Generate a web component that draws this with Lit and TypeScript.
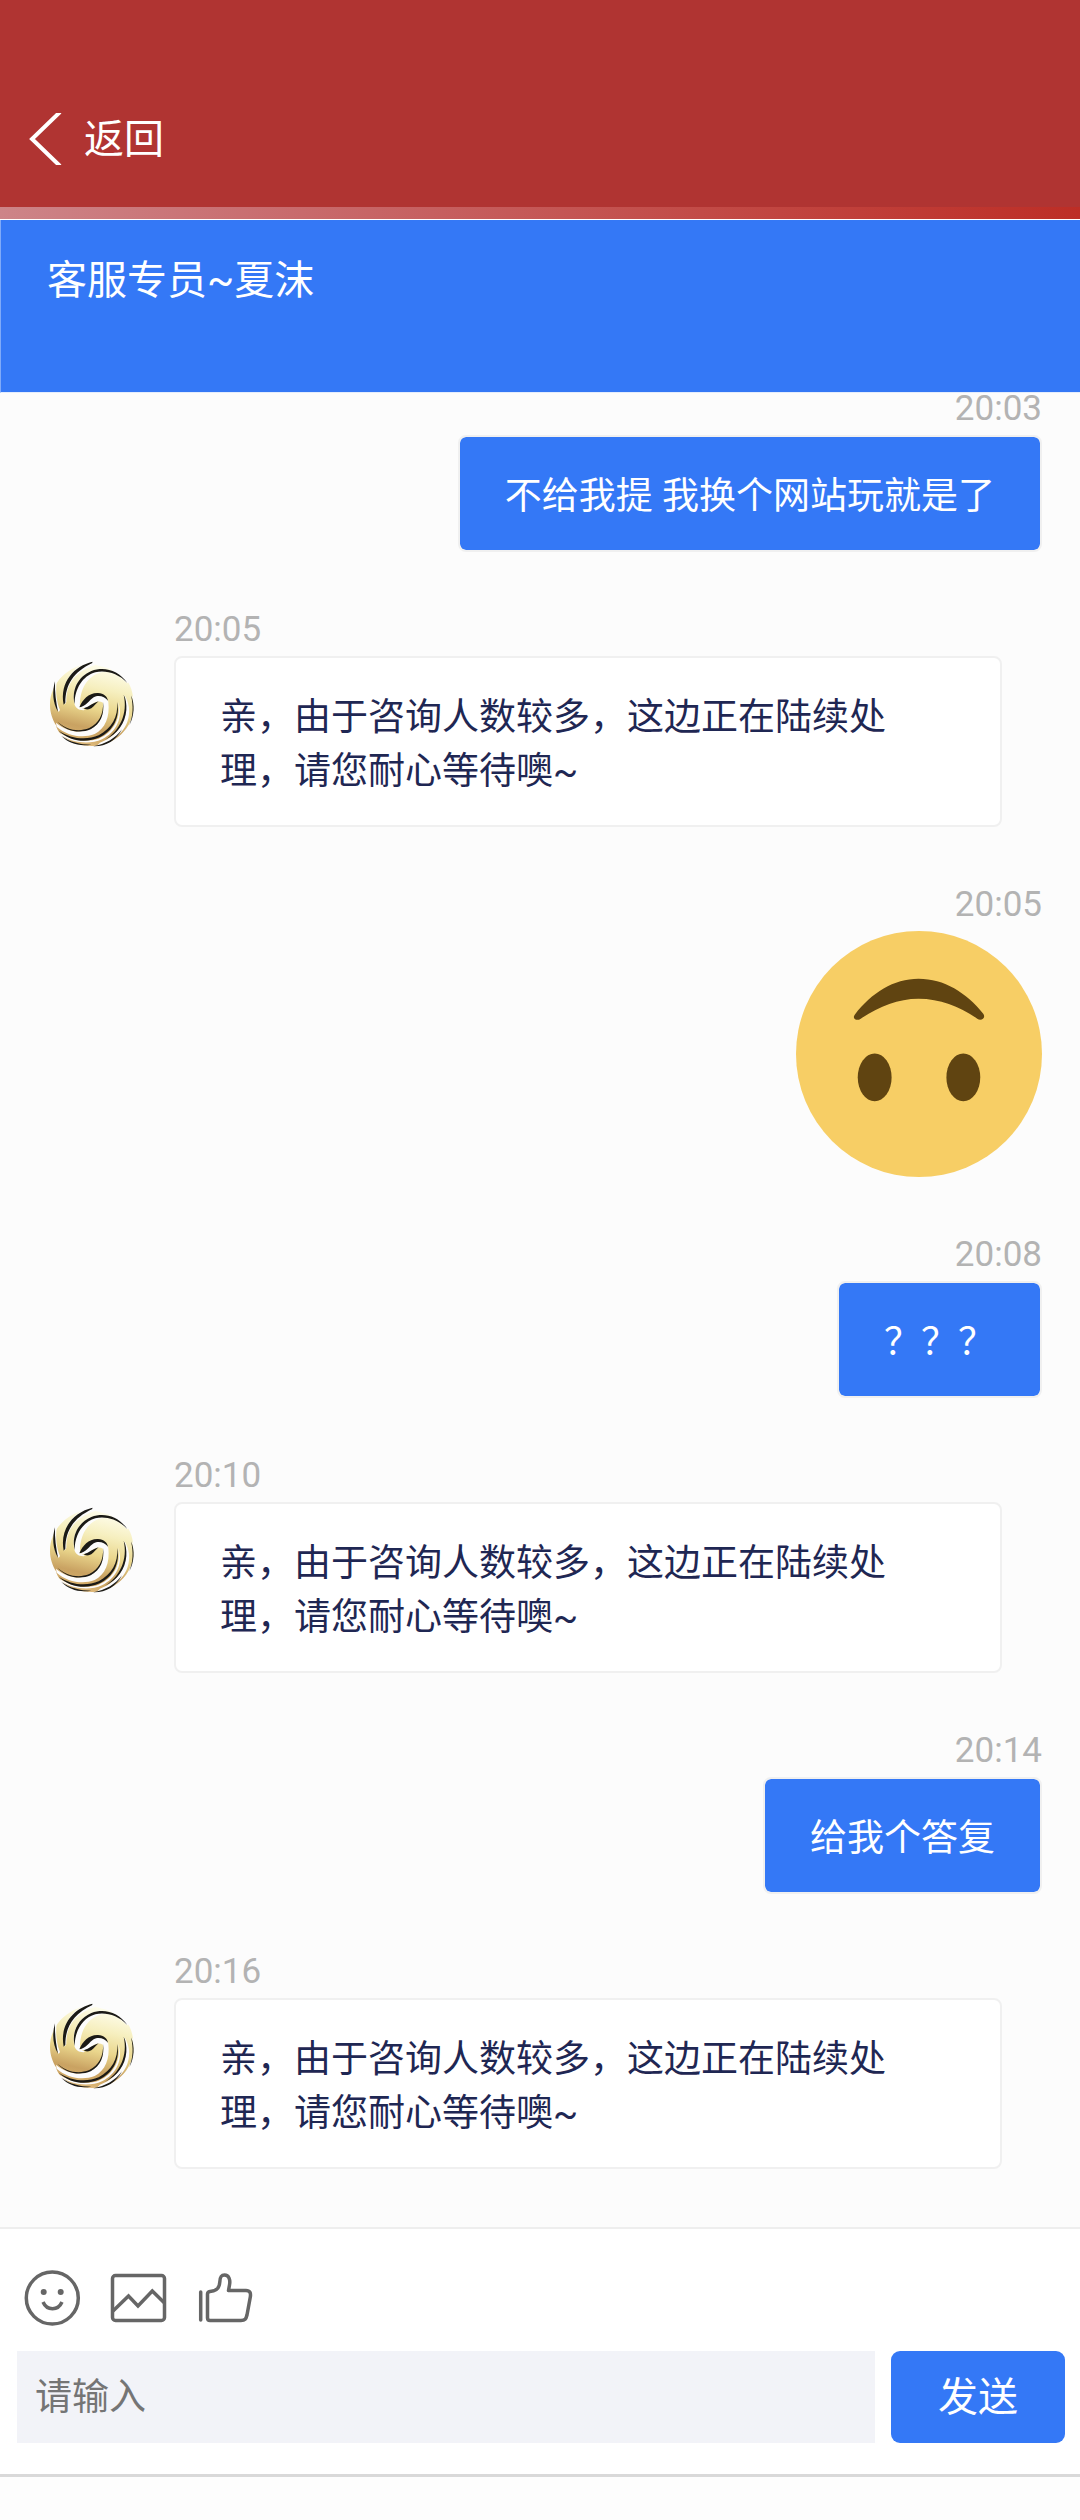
import { LitElement, html, css, svg, nothing } from "lit";
import { customElement, property } from "lit/decorators.js";

type Message = {
  side: "agent" | "visitor";
  time: string;
  text?: string;
  emoji?: boolean;
};

const WAIT_REPLY = "亲，由于咨询人数较多，这边正在陆续处理，请您耐心等待噢~";

const MESSAGES: Message[] = [
  { side: "visitor", time: "20:03", text: "不给我提 我换个网站玩就是了" },
  { side: "agent", time: "20:05", text: WAIT_REPLY },
  { side: "visitor", time: "20:05", emoji: true },
  { side: "visitor", time: "20:08", text: "？？？" },
  { side: "agent", time: "20:10", text: WAIT_REPLY },
  { side: "visitor", time: "20:14", text: "给我个答复" },
  { side: "agent", time: "20:16", text: WAIT_REPLY },
];

@customElement("phoenix-avatar")
export class PhoenixAvatar extends LitElement {
  static styles = css`
    :host {
      display: block;
    }
    .logo {
      display: block;
      width: 88px;
      height: 88px;
    }
  `;

  render() {
    return html`
      <svg class="logo" viewBox="54 62 264 264" role="img" aria-label="客服头像">
        <defs>
          <linearGradient id="gold" gradientUnits="userSpaceOnUse" x1="215" y1="70" x2="160" y2="320">
            <stop offset="0" stop-color="#fffff2" />
            <stop offset="0.3" stop-color="#f6efbf" />
            <stop offset="0.55" stop-color="#ead68c" />
            <stop offset="0.78" stop-color="#c9a262" />
            <stop offset="0.9" stop-color="#d2ab68" />
            <stop offset="1" stop-color="#e2bd80" />
          </linearGradient>
        </defs>
        ${svg`
        <path fill="url(#gold)" d="M184 70C118 78 60 128 60 196C60 222 68 240 78 258C84 290 130 322 190 320C250 318 312 270 311 196C310 160 302 134 286 118C262 84 228 70 184 70Z" />
        <g fill="#fcfcfc">
          <path d="M184 66C132 80 92 124 104 196L109 188C108 136 132 98 196 76L240 88L292 132L300 122L240 60Z" />
          <path d="M76 124C66 158 70 190 86 218L90 212C80 188 76 158 80 128Z" />
          <path d="M290 132C268 94 212 80 172 102C138 122 124 160 134 196C138 208 150 214 166 212L150 203C148 156 168 110 216 98C250 94 272 106 290 132Z" />
          <path d="M152 206C166 188 176 168 202 166C222 166 232 176 235 188C240 232 226 268 194 284C158 298 112 290 80 262L78 250C112 280 158 284 190 264C216 244 222 218 219 190C206 182 192 188 180 200C172 206 162 208 152 206Z" />
          <path d="M264 186C276 234 250 280 206 298C170 310 124 304 90 280L94 288C130 312 180 316 216 300C258 280 282 234 264 186Z" />
          <path d="M282 166C302 222 274 286 210 310L200 320C262 306 302 262 297 206C295 190 290 176 282 166Z" />
          <path d="M304 166C316 200 314 232 300 264L318 240L320 190Z" />
        </g>
        <g fill="#1b1a16">
          <path d="M187 67C134 80 88 126 101 196L106 190C106 136 130 98 187 71Z" />
          <path d="M75 126C66 158 68 190 84 217C78 188 74 160 75 126Z" />
          <path d="M134 194C124 152 144 112 184 95C224 80 266 94 292 131C264 102 228 92 196 99C158 110 134 148 134 194Z" />
          <path d="M148 204C158 180 176 160 204 161C222 162 232 172 234 184C224 170 204 166 191 174C178 182 168 202 148 204Z" />
          <path d="M161 207C178 202 190 190 206 186C194 196 188 208 176 210C170 211 165 210 161 207Z" />
          <path d="M219 188C221 226 206 252 178 266C144 280 108 270 82 247C108 276 150 284 182 270C212 254 224 224 219 188Z" />
          <path d="M261 188C266 232 244 268 206 288C168 304 122 298 86 274C122 308 170 312 209 294C250 274 272 232 261 188Z" />
          <path d="M281 166C294 222 270 274 224 302C262 284 286 252 289 212C290 194 288 178 281 166Z" />
          <path d="M303 168C311 202 309 230 298 258C313 230 315 196 303 168Z" />
          <path d="M276 270C256 298 226 314 190 321C228 322 258 304 276 270Z" />
          <path d="M94 290C116 312 146 322 184 316C150 316 120 308 94 290Z" />
        </g>
        `}
      </svg>
    `;
  }
}

@customElement("chat-message")
export class ChatMessage extends LitElement {
  @property({ attribute: false }) message!: Message;

  static styles = css`
    :host {
      display: block;
    }
    .row {
      display: flex;
      gap: 38px;
      padding: 0 78px 0 48px;
    }
    .row.visitor {
      justify-content: flex-end;
      padding: 0 38px;
    }
    .avatar {
      padding-top: 46px;
    }
    .body {
      display: flex;
      flex-direction: column;
      align-items: flex-start;
      min-width: 0;
    }
    .agent .body {
      flex: 1;
    }
    .visitor .body {
      align-items: flex-end;
    }
    .time {
      margin-bottom: 10px;
      font-size: 35px;
      line-height: 32px;
      color: #b3b3b3;
    }
    .bubble {
      box-sizing: border-box;
      margin: 0;
      padding: 33px 45px 26px;
      border: 2px solid #f0f0f0;
      border-radius: 8px;
      font-size: 37px;
      line-height: 54px;
      color: #1f2753;
      background: #ffffff;
    }
    .agent .bubble {
      width: 100%;
      padding-left: 44px;
      padding-right: 90px;
    }
    .visitor .bubble {
      color: #ffffff;
      background: #3478f6;
      background-clip: padding-box;
    }
    .emoji {
      display: block;
      width: 246px;
      height: 246px;
    }
  `;

  render() {
    const m = this.message;
    return html`
      <article class="row ${m.side}">
        ${m.side === "agent"
          ? html`<div class="avatar"><phoenix-avatar></phoenix-avatar></div>`
          : nothing}
        <div class="body">
          <time class="time">${m.time}</time>
          ${m.emoji
            ? html`<svg class="emoji" viewBox="0 0 247 247" role="img" aria-label="倒脸">
                <circle cx="123.500" cy="123.500" r="123.500" fill="#f7ce65" />
                <path
                  fill="#604411"
                  d="M59 84C76 62 98 48 123 48C149 48 171 62 188 83C191 87 186 91 182 88C164 76 145 68 123 68C102 68 84 76 65 88C61 91 56 88 59 84Z"
                />
                <ellipse cx="79" cy="147" rx="17" ry="24" fill="#604411" />
                <ellipse cx="168" cy="147" rx="17" ry="24" fill="#604411" />
              </svg>`
            : html`<p class="bubble">${m.text}</p>`}
        </div>
      </article>
    `;
  }
}

@customElement("app-root")
export class AppRoot extends LitElement {
  static styles = css`
    :host {
      display: flex;
      flex-direction: column;
      min-height: 100vh;
      background: #fcfcfc;
      font-family: Roboto, "Noto Sans CJK SC", sans-serif;
    }
    .topbar {
      box-sizing: border-box;
      height: 207px;
      padding: 70px 29px 0;
      display: flex;
      align-items: center;
      background: #b03432;
    }
    .back {
      display: flex;
      align-items: center;
      gap: 21px;
      color: #ffffff;
      font-size: 40px;
      line-height: 56px;
      text-decoration: none;
    }
    .back-label {
      padding-top: 2px;
    }
    .chevron {
      display: block;
      width: 34px;
      height: 52px;
    }
    .progress {
      height: 12px;
      background: linear-gradient(90deg, #cd8488, #c86a6c 28%, #c24b47 65%, #bd2e26);
      border-bottom: 1px solid #ffffff;
    }
    .agent-bar {
      box-sizing: border-box;
      min-height: 173px;
      padding: 32px 46px 0;
      border-left: 1px solid #7faaf9;
      border-bottom: 1px solid #e4edfd;
      background: #3478f6;
      color: #ffffff;
    }
    .agent-name {
      margin: 0;
      font-size: 40px;
      font-weight: 400;
      line-height: 58px;
    }
    .messages {
      flex: 1;
      display: flex;
      flex-direction: column;
      gap: 62px;
    }
    .composer {
      padding: 40px 15px 31px 17px;
      border-top: 2px solid #eeeeee;
      border-bottom: 3px solid #d9d9d9;
      background: #ffffff;
    }
    .tools {
      display: flex;
      gap: 26px;
      padding-left: 5px;
      margin-bottom: 20px;
    }
    .tool {
      display: block;
      padding: 0;
      border: 0;
      background: none;
      color: #666666;
    }
    .icon {
      display: block;
      width: 61px;
      height: 62px;
      fill: none;
      stroke: currentColor;
      stroke-width: 3.500;
      stroke-linejoin: round;
    }
    .entry {
      display: flex;
      gap: 16px;
    }
    .field,
    .send {
      box-sizing: border-box;
      height: 92px;
      border: 0;
      font-family: inherit;
    }
    .field {
      flex: 1;
      min-width: 0;
      padding: 0 18px;
      border-radius: 0;
      font-size: 37px;
      color: #333333;
      background: #f2f3f8;
    }
    .field::placeholder {
      color: #757575;
    }
    .send {
      width: 174px;
      padding: 0 0 6px;
      border-radius: 9px;
      font-size: 40px;
      color: #ffffff;
      background: #3478f6;
    }
    .safe-area {
      height: 43px;
      background: #fdfdfd;
    }
  `;

  render() {
    return html`
      <header class="topbar">
        <a class="back" href="#back">
          <svg class="chevron" viewBox="0 0 34 52" aria-hidden="true">
            <path d="M31 -1L3 26L31 53" fill="none" stroke="#fff" stroke-width="4" />
          </svg>
          <span class="back-label">返回</span>
        </a>
      </header>
      <div class="progress"></div>
      <section class="agent-bar">
        <h1 class="agent-name">客服专员~夏沫</h1>
      </section>
      <main class="messages">
        ${MESSAGES.map((m) => html`<chat-message .message=${m}></chat-message>`)}
      </main>
      <footer class="composer">
        <div class="tools">
          <button class="tool" type="button" aria-label="表情">
            <svg class="icon" viewBox="22 2269 61 62">
              <circle cx="52.300" cy="2298" r="26" />
              <circle cx="43.700" cy="2292" r="3" fill="currentColor" stroke="none" />
              <circle cx="60.700" cy="2292" r="3" fill="currentColor" stroke="none" />
              <path d="M43 2302C47 2311 58 2311 62 2302" />
            </svg>
          </button>
          <button class="tool" type="button" aria-label="图片">
            <svg class="icon" viewBox="109 2269 61 62">
              <rect x="112.500" y="2275.500" width="52" height="45" rx="3" />
              <path stroke-linejoin="miter" d="M113 2311L128.500 2296L138 2306L152.300 2291L164.500 2303" />
            </svg>
          </button>
          <button class="tool" type="button" aria-label="点赞">
            <svg class="icon" viewBox="196 2269 61 62">
              <path d="M200.700 2292V2320" stroke-linecap="round" />
              <path d="M207.500 2294Q207.500 2292 210 2291.500C217 2291 219.500 2288 219.800 2282C220 2277 221 2275 224.500 2275C229 2275 230.500 2280 229.500 2285L228.500 2290.500H246C250 2290.500 251 2293 250.300 2297L247 2315C246 2319 245 2320.500 241 2320.500H210Q207.500 2320.500 207.500 2318Z" />
            </svg>
          </button>
        </div>
        <form class="entry" @submit=${(e: Event) => e.preventDefault()}>
          <input class="field" type="text" placeholder="请输入" aria-label="请输入" />
          <button class="send" type="submit">发送</button>
        </form>
      </footer>
      <div class="safe-area"></div>
    `;
  }
}
